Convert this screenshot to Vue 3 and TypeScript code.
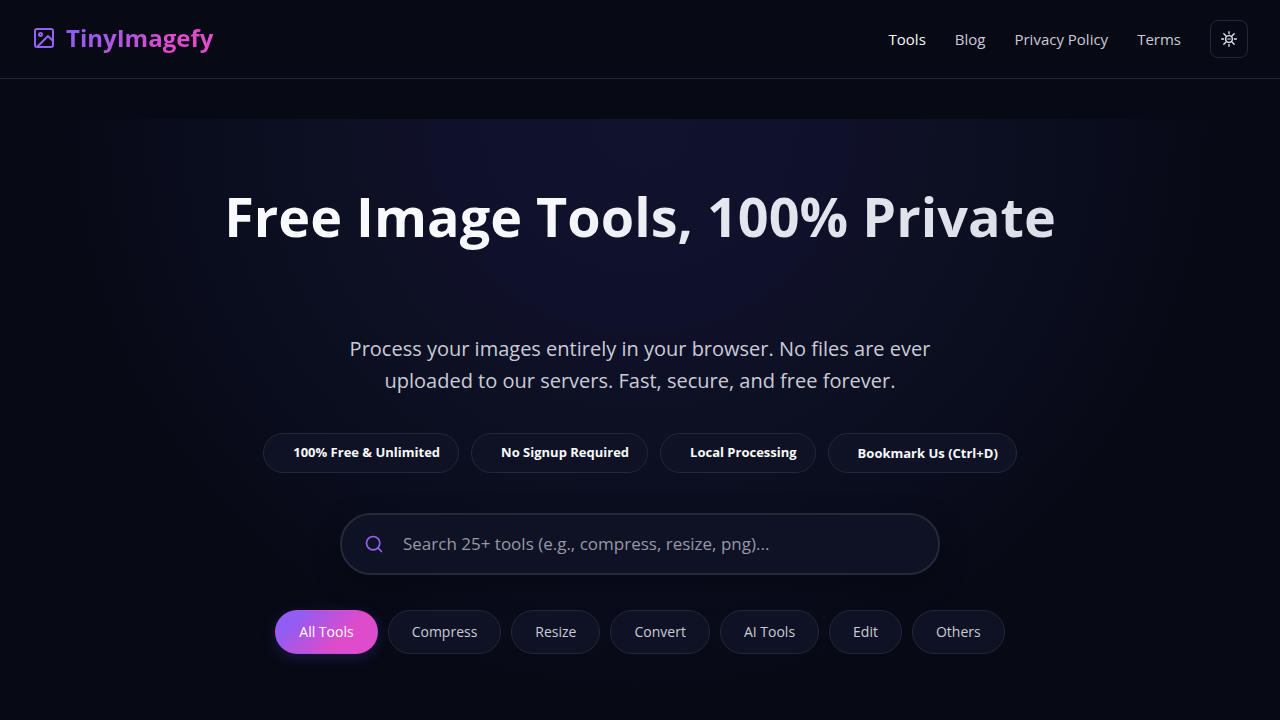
<script setup lang="ts">
import { ref } from 'vue'

interface NavLink {
  label: string
  active?: boolean
}

const links: NavLink[] = [
  { label: 'Tools', active: true },
  { label: 'Blog' },
  { label: 'Privacy Policy' },
  { label: 'Terms' },
]
const perks: string[] = ['100% Free & Unlimited', 'No Signup Required', 'Local Processing']
const categories: string[] = ['All Tools', 'Compress', 'Resize', 'Convert', 'AI Tools', 'Edit', 'Others']
const selected = ref<string>('All Tools')
const query = ref<string>('')
</script>

<template>
  <div class="page">
    <header class="header">
      <a class="logo" href="#">
        <svg width="24" height="24" viewBox="0 0 24 24" fill="none" stroke="#9560f4" stroke-width="2" stroke-linecap="round" stroke-linejoin="round" aria-hidden="true">
          <rect x="3" y="3" width="18" height="18" rx="2" />
          <circle cx="8.5" cy="8.5" r="1.5" />
          <path d="M21 15l-5-5L5 21" />
        </svg>
        <span class="logo-text">TinyImagefy</span>
      </a>
      <nav class="nav">
        <a v-for="link in links" :key="link.label" href="#" class="nav-link" :class="{ active: link.active }">{{ link.label }}</a>
        <button class="theme" type="button" aria-label="Toggle theme">
          <svg width="16" height="16" viewBox="0 0 24 24" fill="none" stroke="currentColor" stroke-width="2" stroke-linecap="round" stroke-linejoin="round" aria-hidden="true">
            <circle cx="12" cy="12" r="5" />
            <path d="M12 1v3M12 20v3M4.22 4.22l3 3M16.78 16.78l3 3M1 12h3M20 12h3M4.22 19.78l3-3M16.78 7.22l3-3" />
            <path d="M10 12h4" stroke-width="1.5" />
          </svg>
        </button>
      </nav>
    </header>

    <main class="main">
      <section class="hero">
        <h1 class="title">Free Image Tools, 100% Private</h1>
        <p class="lead">Process your images entirely in your browser. No files are ever uploaded to our servers. Fast, secure, and free forever.</p>
        <div class="perks">
          <span v-for="perk in perks" :key="perk" class="perk">{{ perk }}</span>
          <button type="button" class="perk">Bookmark Us (Ctrl+D)</button>
        </div>
        <label class="search">
          <svg width="20" height="20" viewBox="0 0 24 24" fill="none" stroke="#9560f4" stroke-width="2" stroke-linecap="round" stroke-linejoin="round" aria-hidden="true">
            <circle cx="11" cy="11" r="8" />
            <path d="M21 21l-4.35-4.35" />
          </svg>
          <input v-model="query" type="text" aria-label="Search tools" placeholder="Search 25+ tools (e.g., compress, resize, png)..." />
        </label>
        <div class="filters">
          <button
            v-for="category in categories"
            :key="category"
            type="button"
            class="filter"
            :class="{ selected: category === selected }"
            @click="selected = category"
          >{{ category }}</button>
        </div>
      </section>
    </main>
  </div>
</template>

<style>
body {
  margin: 0;
  background: #070914;
}
</style>

<style scoped>
.page {
  min-height: 100vh;
  overflow: hidden;
  font-family: "Open Sans", "Noto Sans", sans-serif;
  font-size: 16px;
  color: #f8fafc;
  background: #070914;
  box-sizing: border-box;
}

.page * {
  box-sizing: border-box;
}

button,
input {
  font-family: inherit;
}

.header {
  display: flex;
  align-items: center;
  justify-content: space-between;
  padding: 20px 32px;
  border-bottom: 1px solid #242736;
}

.logo {
  display: flex;
  align-items: center;
  gap: 10px;
  padding-bottom: 2px;
  text-decoration: none;
}

.logo-text {
  font-size: 24px;
  line-height: 36px;
  font-weight: 700;
  color: transparent;
  background: linear-gradient(135deg, #8f5cf2 10%, #b654de 45%, #de4bcb 70%);
  background-clip: text;
}

.nav {
  display: flex;
  align-items: center;
  gap: 29px;
}

.nav-link {
  font-size: 15px;
  color: #c9ccd8;
  text-decoration: none;
}

.nav-link.active {
  color: #f8fafc;
}

.theme {
  display: flex;
  align-items: center;
  justify-content: center;
  width: 38px;
  height: 38px;
  padding: 0;
  color: #e2e8f0;
  background: transparent;
  border: 1px solid #242736;
  border-radius: 8px;
}

.main {
  padding-top: 40px;
}

.hero {
  display: flex;
  flex-direction: column;
  align-items: center;
  padding: 64px 24px;
  text-align: center;
  background: radial-gradient(circle at 50% 0, #11122c 0, #0f1029 210px, #0d1022 320px, #0a0d1e 440px, #070914 590px);
}

.title {
  margin: 0 0 76px;
  padding-bottom: 8px;
  font-size: 54px;
  line-height: 66px;
  font-weight: 700;
  color: transparent;
  background: linear-gradient(135deg, #fafbfe, #f7f8fc 40%, #e3e6ee 60%, #dcdfe8);
  background-clip: text;
}

.lead {
  max-width: 600px;
  margin: 0 0 36px;
  font-size: 20px;
  line-height: 32px;
  color: #c9ccd8;
}

.perks {
  display: flex;
  flex-wrap: wrap;
  justify-content: center;
  gap: 12px;
  margin-bottom: 40px;
}

.perk {
  height: 40px;
  padding: 0 18px 0 29px;
  font-size: 13px;
  line-height: 36px;
  font-weight: 700;
  color: #f8fafc;
  background: #0f1224;
  border: 1px solid #242736;
  border-radius: 20px;
}

.search {
  display: flex;
  align-items: center;
  gap: 19px;
  width: 100%;
  max-width: 600px;
  height: 62px;
  margin-bottom: 35px;
  padding: 0 22px;
  background: #0f1224;
  border: 2px solid #262939;
  border-radius: 31px;
  box-shadow: 0 10px 30px rgba(0, 0, 0, 0.3);
}

.search input {
  flex: 1;
  min-width: 0;
  padding: 0 0 2px;
  font-size: 17px;
  color: #f8fafc;
  background: transparent;
  border: 0;
  outline: 0;
}

.search input::placeholder {
  color: #9699a7;
  opacity: 1;
}

.filters {
  display: flex;
  flex-wrap: wrap;
  justify-content: center;
  gap: 10px;
}

.filter {
  height: 44px;
  padding: 0 23px 2px;
  font-size: 14px;
  color: #c9ccd8;
  background: #0f1224;
  border: 1px solid #242736;
  border-radius: 22px;
}

.filter.selected {
  color: #ffffff;
  background: linear-gradient(135deg, #935cf2 20%, #de4bcb 65%);
  border-color: transparent;
  box-shadow: 0 4px 15px rgba(99, 91, 255, 0.2);
}
</style>
